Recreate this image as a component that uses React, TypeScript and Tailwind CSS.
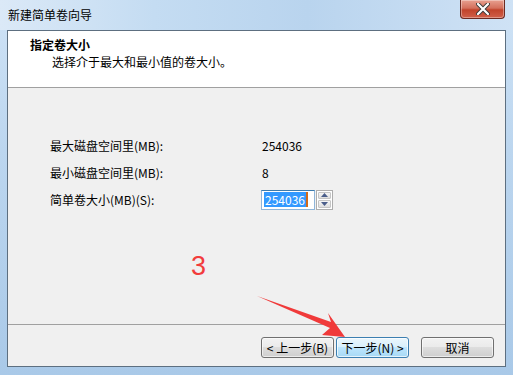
import React from 'react'

const font = { fontFamily: '"Noto Sans CJK SC", "Liberation Sans", sans-serif' }

function WinButton({ children, focused = false }: { children: React.ReactNode; focused?: boolean }) {
  return (
    <div
      className={`flex h-[21px] w-[73px] items-center justify-center rounded-[3px] border text-[12px] leading-none text-black ${
        focused
          ? 'border-[#3c7fb1] bg-[linear-gradient(180deg,#eaf6fd_0%,#d9f0fc_45%,#bee6fd_50%,#a7d9f5_100%)] shadow-[inset_0_0_0_1px_rgba(255,255,255,0.7)]'
          : 'border-[#707070] bg-[linear-gradient(180deg,#f2f2f2_0%,#ebebeb_45%,#dddddd_50%,#cfcfcf_100%)] shadow-[inset_0_0_0_1px_rgba(255,255,255,0.6)]'
      }`}
    >
      {children}
    </div>
  )
}

export default function App() {
  return (
    <div
      style={font}
      className="relative flex h-[375px] w-[513px] flex-col overflow-hidden bg-[linear-gradient(180deg,#cfe3f6_0%,#bcd6ef_40%,#a9c9e8_100%)]"
    >
      {/* title bar */}
      <div className="flex h-[30px] items-center bg-[linear-gradient(90deg,#dbe9f7_0%,#c4dcf2_30%,#b9d4ee_60%,#cfe2f5_100%)] pl-[8px] text-[12px] text-black">
        新建简单卷向导
      </div>

      {/* close button */}
      <div className="absolute right-[8px] top-0 flex h-[19px] w-[45px] items-center justify-center rounded-b-[4px] border border-t-0 border-[#6b2a22] bg-[linear-gradient(180deg,#e8a090_0%,#d4705c_45%,#c1432b_55%,#d0604a_100%)] shadow-[inset_0_0_0_1px_rgba(255,255,255,0.35)]">
        <svg width="14" height="12" viewBox="0 0 14 12">
          <path d="M2 1 L12 11 M12 1 L2 11" stroke="#3a3a3a" strokeWidth="4" strokeLinecap="round" />
          <path d="M2 1 L12 11 M12 1 L2 11" stroke="#ffffff" strokeWidth="2.2" strokeLinecap="round" />
        </svg>
      </div>

      {/* client area */}
      <div className="mx-[7px] mb-[8px] flex flex-1 flex-col border border-[#5d6f80] bg-[#f0f0f0]">
        <div className="h-[57px] border-b border-[#a0a0a0] bg-white pl-[22px] pt-[6px] text-[12px] leading-[16px] text-black">
          <div className="font-bold">指定卷大小</div>
          <div className="pl-[22px] pt-[1px]">选择介于最大和最小值的卷大小。</div>
        </div>

        <div className="flex-1 pl-[42px] pt-[44px] text-[12px] text-black">
          <div className="grid grid-cols-[212px_auto] auto-rows-[27px] items-center">
            <div>最大磁盘空间里(MB):</div>
            <div>254036</div>
            <div>最小磁盘空间里(MB):</div>
            <div>8</div>
            <div>简单卷大小(MB)(S):</div>
            <div className="-ml-[1px] flex items-center gap-[1px]">
              <div className="flex h-[20px] w-[54px] items-center border border-[#8fb5d9] border-t-[#3d7bad] bg-white pl-[2px]">
                <span className="bg-[#3399ff] px-[1px] leading-[15px] text-white">254036</span>
                <span className="h-[15px] w-[2px] bg-[#d06a1a]" />
              </div>
              <div className="flex h-[20px] w-[17px] flex-col gap-[1px] border border-[#adadad] bg-white p-[1px]">
                <div className="flex flex-1 items-center justify-center rounded-[1px] border border-[#c5c5c5] bg-[linear-gradient(180deg,#f6f6f6,#dedede)]">
                  <svg width="7" height="4" viewBox="0 0 7 4"><path d="M0 4 L3.5 0 L7 4 Z" fill="#4b5e8a" /></svg>
                </div>
                <div className="flex flex-1 items-center justify-center rounded-[1px] border border-[#c5c5c5] bg-[linear-gradient(180deg,#f6f6f6,#dedede)]">
                  <svg width="7" height="4" viewBox="0 0 7 4"><path d="M0 0 L7 0 L3.5 4 Z" fill="#4b5e8a" /></svg>
                </div>
              </div>
            </div>
          </div>
        </div>

        <div className="flex h-[42px] items-start justify-end border-t border-[#a0a0a0] pr-[11px] pt-[12px]">
          <div className="flex gap-[2px]">
            <WinButton>&lt; 上一步(B)</WinButton>
            <WinButton focused>下一步(N) &gt;</WinButton>
          </div>
          <div className="ml-[12px]">
            <WinButton>取消</WinButton>
          </div>
        </div>
      </div>

      {/* annotation: step number */}
      <div
        className="absolute left-[191px] top-[253px] text-[27px] leading-none text-[#f23c3c]"
        style={{ fontFamily: '"Liberation Sans", sans-serif' }}
      >
        3
      </div>

      {/* annotation: arrow */}
      <svg className="absolute left-0 top-0" width="513" height="375" viewBox="0 0 513 375">
        <path d="M257 296 L331 322 L328 313 L345 337 L322 335 L330 328 Z" fill="#f03a3a" />
      </svg>
    </div>
  )
}
